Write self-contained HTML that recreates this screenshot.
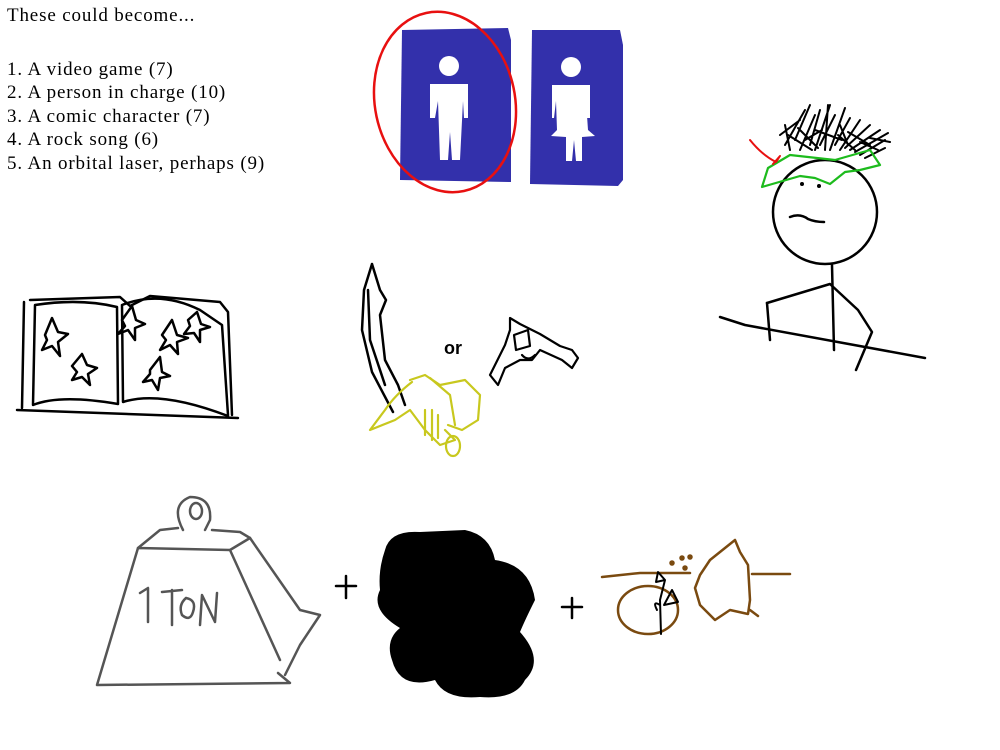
<!DOCTYPE html>
<html><head><meta charset="utf-8"><style>
html,body{margin:0;padding:0;background:#fff;width:1000px;height:750px;overflow:hidden}
.t{position:absolute;left:7px;font-family:"Liberation Serif",serif;font-size:19px;letter-spacing:0.85px;line-height:23.4px;color:#000}
svg{position:absolute;left:0;top:0}
</style></head><body>
<svg width="1000" height="750" viewBox="0 0 1000 750" fill="none" stroke-linecap="round" stroke-linejoin="round">
<path d="M402 30 L508 28 L511 40 L511 182 L400 180 Z" fill="#3330ab"/>
<path d="M532 30 L620 30 L623 45 L623 180 L618 186 L530 184 Z" fill="#3330ab"/>
<g fill="#fff">
<circle cx="449" cy="66" r="10"/>
<path d="M430 84 L468 84 L468 118 L464 118 L463 101 L460 160 L452 160 L450 132 L448 160 L440 160 L438 101 L435 118 L430 118 Z"/>
<circle cx="571" cy="67" r="10"/>
<path d="M552 85 L590 85 L590 118 L587 118 L586 101 L588 130 L595 136 L582 137 L582 161 L576 161 L574 140 L572 161 L566 161 L566 137 L551 136 L557 130 L556 101 L554 118 L552 118 Z"/>
</g>
<ellipse cx="445" cy="102" rx="70" ry="91" transform="rotate(-12 445 102)" stroke="#e81010" stroke-width="2.5"/>
<g stroke="#000" stroke-width="2.5">
<ellipse cx="825" cy="212" rx="52" ry="52"/>
<path d="M790 217 Q800 213 808 219 Q815 222 824 222"/>
<path d="M832 265 L834 350"/>
<path d="M767 303 L830 284 L858 310 L872 332 L856 370"/>
<path d="M767 303 L770 340"/>
<path d="M720 317 L745 325 L925 358"/>
<g stroke-width="2">
<path d="M780 135 L800 120 M785 145 L805 110 M795 140 L810 105 M800 150 L815 115 M810 145 L820 110 M815 150 L830 105 M820 145 L835 115 M830 150 L845 108 M835 145 L850 118 M840 150 L860 120 M845 148 L870 125 M850 150 L880 130 M855 152 L888 133 M860 155 L885 140 M865 158 L885 148 M790 150 L785 125 M825 150 L828 105 M788 135 L812 150 M798 128 L818 148 M805 140 L822 130 M838 135 L855 150 M848 132 L870 145 M860 142 L878 150 M840 125 L848 145 M870 138 L890 142 M815 130 L842 140"/>
</g>
</g>
<circle cx="802" cy="184" r="2" fill="#000"/><circle cx="819" cy="186" r="2" fill="#000"/>
<path d="M762 187 L768 168 L790 155 L835 160 L870 150 L880 165 L860 170 L845 172 L830 184 L815 178 L800 176 Z" stroke="#1dbb1d" stroke-width="2.2"/>
<path d="M750 140 Q762 155 776 162 L780 156 L773 164" stroke="#e81010" stroke-width="2"/>
<g stroke="#000" stroke-width="2.5">
<path d="M30 300 L120 297 L130 306 L150 296 L220 302 L228 312 L232 415"/>
<path d="M24 302 L22 408 M17 410 L238 418"/>
<path d="M35 305 L33 405 Q60 394 118 404 L117 307 Q80 298 35 305 Z"/>
<path d="M122 305 L123 402 Q160 390 228 416 M122 305 Q160 290 200 310 L222 325 L228 415"/>
<path d="M45 335 L52 318 L58 332 L68 334 L58 342 L60 356 L52 346 L42 350 L47 340 Z"/>
<path d="M72 366 L82 354 L87 365 L97 368 L88 374 L90 385 L82 377 L72 380 L77 372 Z"/>
<path d="M122 320 L132 306 L136 320 L145 324 L135 328 L135 340 L128 330 L118 334 L125 326 Z"/>
<path d="M162 335 L172 320 L177 335 L188 338 L177 342 L178 354 L170 345 L160 350 L166 340 Z"/>
<path d="M150 370 L160 357 L162 372 L170 376 L160 378 L158 390 L152 380 L143 382 L150 374 Z"/>
<path d="M188 320 L197 312 L201 324 L210 327 L200 330 L200 342 L194 333 L184 334 L190 326 Z"/>
</g>
<g stroke="#000" stroke-width="2.5">
<path d="M372 264 L380 290 L386 300 L380 315 L385 360 L398 385 L405 405 M372 264 L364 290 L362 330 L372 372 L393 412 M368 290 L370 340 L385 385"/>
</g>
<g stroke="#c8c81e" stroke-width="2.2">
<path d="M410 380 L425 375 L440 385 L465 380 L480 395 L478 420 L462 430 L448 425"/>
<path d="M412 382 Q395 395 385 410 L370 430 L395 420 L410 410 L425 430 L440 445 L455 440 L445 430"/>
<path d="M425 410 L425 435 M432 410 L432 440 M438 415 L438 438"/>
<ellipse cx="453" cy="446" rx="7" ry="10"/>
<path d="M430 378 L450 395 L455 425"/>
</g>
<text x="444" y="354" font-family="Liberation Sans,sans-serif" font-size="18" font-weight="bold" fill="#000">or</text>
<g stroke="#000" stroke-width="2.2">
<path d="M510 318 L520 324 L540 334 L560 346 L572 350 L578 358 L572 368 L562 360 L540 350 L532 360 L520 360 L505 368 L498 385 L490 375 L505 345 L510 330 Z"/>
<path d="M514 335 L528 330 L530 346 L516 350 Z M522 355 Q528 362 535 355"/>
</g>
<g stroke="#555" stroke-width="2.5">
<path d="M138 548 L97 685 L290 683 L278 673"/>
<path d="M138 548 L230 550 L250 538 L240 532 L212 530 M138 548 L160 530 L178 528"/>
<path d="M230 550 L280 660 M250 538 L300 610 L320 615 L300 645 L285 675"/>
<path d="M183 530 Q170 505 190 497 Q212 497 210 520 L205 530"/>
<ellipse cx="196" cy="511" rx="6" ry="8"/>
<path d="M140 593 L148 588 L148 622 M162 592 L182 590 M172 590 L172 625 M186 598 Q178 605 182 615 Q190 622 193 612 Q197 600 186 598 M200 625 L202 595 L215 622 L217 593"/>
</g>
<g stroke="#000" stroke-width="2.5"><path d="M336 586 L356 586 M346 576 L346 598"/><path d="M562 607 L582 607 M572 598 L572 618"/></g>
<path d="M385 550 Q390 530 420 532 L465 530 Q490 535 495 560 Q530 565 535 600 Q525 620 520 632 Q545 660 525 680 Q515 700 480 697 Q445 700 435 680 Q400 690 392 660 Q385 640 400 628 Q370 610 380 590 Q378 570 385 550 Z" fill="#000"/>
<g stroke="#7a4a10" stroke-width="2.5">
<path d="M602 577 L640 573 L690 573 M752 574 L790 574"/>
<ellipse cx="648" cy="610" rx="30" ry="24"/>
<path d="M700 575 L710 560 L735 540 L740 552 L748 565 L750 600 L748 614 L730 610 L715 620 L700 605 L695 588 Z M750 610 L758 616"/>
<circle cx="672" cy="563" r="1.5" fill="#7a4a10"/><circle cx="682" cy="558" r="1.5" fill="#7a4a10"/><circle cx="690" cy="557" r="1.5" fill="#7a4a10"/><circle cx="685" cy="568" r="1.5" fill="#7a4a10"/>
</g>
<g stroke="#000" stroke-width="2"><path d="M661 634 L660 600 L665 580 L658 572 L656 582 L665 580 M660 605 Q652 600 657 610 M664 605 L678 602 L672 590 Z"/></g>
</svg>
<div class="t" style="top:4px">These could become...</div>
<div class="t" style="top:58px">1. A video game (7)<br>2. A person in charge (10)<br>3. A comic character (7)<br>4. A rock song (6)<br>5. An orbital laser, perhaps (9)</div>
</body></html>
